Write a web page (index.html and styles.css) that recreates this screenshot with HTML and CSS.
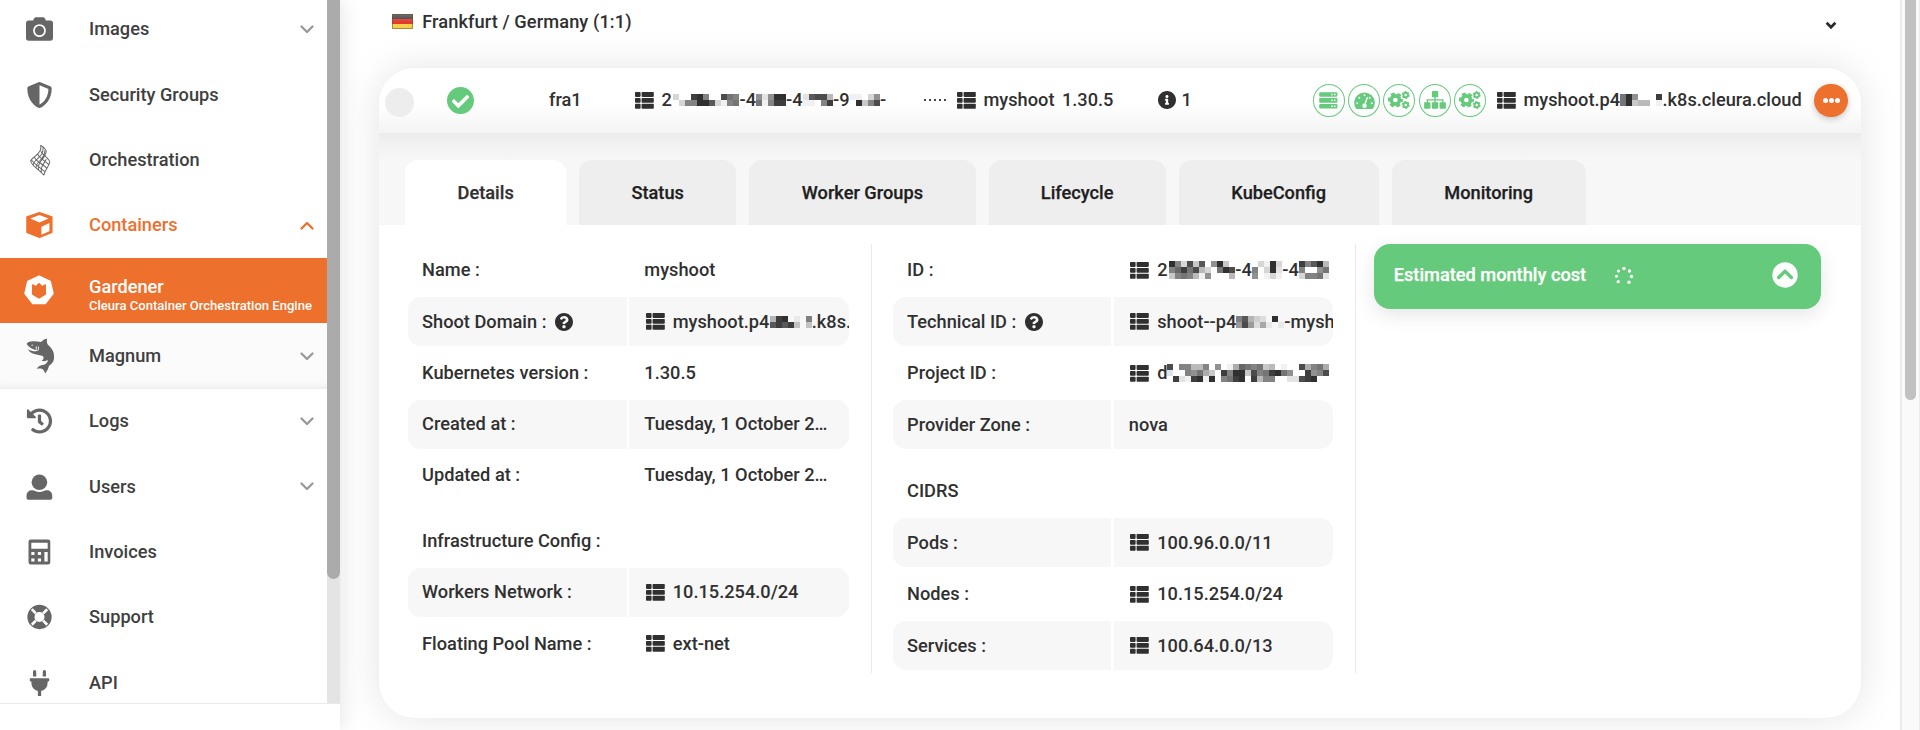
FILE: index.html
```html
<!DOCTYPE html>
<html lang="en">
<head>
<meta charset="utf-8">
<title>Cleura - Gardener</title>
<link rel="stylesheet" href="styles.css">
</head>
<body>
<svg class="defs" aria-hidden="true">
  <symbol id="list" viewBox="0 0 19 17"><rect x="0" y="0" width="5.6" height="4.9" rx=".8"/><rect x="6.6" y="0" width="12.2" height="4.9" rx=".8"/><rect x="0" y="5.9" width="5.6" height="4.9" rx=".8"/><rect x="6.6" y="5.9" width="12.2" height="4.9" rx=".8"/><rect x="0" y="11.8" width="5.6" height="4.9" rx=".8"/><rect x="6.6" y="11.8" width="12.2" height="4.9" rx=".8"/></symbol>
  <symbol id="help" viewBox="8 8 496 496"><path d="M504 256c0 136.997-111.043 248-248 248S8 392.997 8 256C8 119.083 119.043 8 256 8s248 111.083 248 248zM262.655 90c-54.497 0-89.255 22.957-116.549 63.758-3.536 5.286-2.353 12.415 2.715 16.258l34.699 26.31c5.205 3.947 12.621 3.008 16.665-2.122 17.864-22.658 30.113-35.797 57.303-35.797 20.429 0 45.698 13.148 45.698 32.958 0 14.976-12.363 22.667-32.534 33.976C247.128 238.528 216 254.941 216 296v4c0 6.627 5.373 12 12 12h56c6.627 0 12-5.373 12-12v-1.333c0-28.462 83.186-29.647 83.186-106.667 0-58.002-60.165-102-116.531-102zM256 338c-25.365 0-46 20.635-46 46 0 25.364 20.635 46 46 46s46-20.636 46-46c0-25.365-20.635-46-46-46z"/></symbol>
  <symbol id="down" viewBox="0 0 14 9"><path d="M1.5 1.5 7 7l5.500-5.500" fill="none" stroke="currentColor" stroke-width="2.300" stroke-linecap="round" stroke-linejoin="round"/></symbol>
  <symbol id="cogs" viewBox="0 0 23 18">
    <g fill="none" stroke="currentColor"><circle cx="7.700" cy="9" r="4.300" stroke-width="3.800"/><circle cx="7.700" cy="9" r="6.800" stroke-width="2.400" stroke-dasharray="4.100 3.020" stroke-dashoffset="2.050"/>
    <circle cx="18.500" cy="3.800" r="2.300" stroke-width="2"/><circle cx="18.500" cy="3.800" r="3.400" stroke-width="1.400" stroke-dasharray="2 1.560"/>
    <circle cx="18.500" cy="14.200" r="2.300" stroke-width="2"/><circle cx="18.500" cy="14.200" r="3.400" stroke-width="1.400" stroke-dasharray="2 1.560"/></g>
  </symbol>
</svg>

<div class="app">
  <aside class="side">
    <div class="side-scroll">
      <nav class="menu">
        <a class="item"><svg class="ic" viewBox="0 32 512 448"><path d="M512 144v288c0 26.500-21.500 48-48 48H48c-26.500 0-48-21.500-48-48V144c0-26.500 21.500-48 48-48h88l12.300-32.900c7-18.700 24.900-31.100 44.900-31.100h125.500c20 0 37.900 12.400 44.900 31.100L376 96h88c26.500 0 48 21.500 48 48zM376 288c0-66.200-53.800-120-120-120s-120 53.800-120 120 53.800 120 120 120 120-53.800 120-120zm-32 0c0 48.500-39.500 88-88 88s-88-39.500-88-88 39.500-88 88-88 88 39.500 88 88z"/></svg><span>Images</span><svg class="chev"><use href="#down"/></svg></a>
        <a class="item"><svg class="ic" viewBox="0 0 512 512"><path d="M466.500 83.700l-192-80a48.150 48.150 0 0 0-36.900 0l-192 80C27.700 91.100 16 108.600 16 128c0 198.500 114.500 335.700 221.500 380.300 11.800 4.900 25.100 4.900 36.900 0C360.100 472.600 496 349.300 496 128c0-19.400-11.700-36.900-29.500-44.300zM256.100 446.300l-.1-381 175.900 73.300c-3.300 151.400-82.100 261.100-175.800 307.700z"/></svg><span>Security Groups</span></a>
        <a class="item"><svg class="ic heat" viewBox="0 0 22 33" fill="none" stroke="currentColor" stroke-width="1.050"><path d="M11 .5c5.500 3 7.500 6.500 4.500 10.500M11 .5c1.500 5-1.500 8-5.500 11.500S0 16.500 1 18c2 5.500 9 8 13.500 14M13.500 3c1 5-2 8.500-5.500 11.500s-5 5-4.500 7.500M15.500 6c0 4-2 7.500-5 10.500s-4.500 5-4 7.500M15.500 11c-1 3-5 6.500-6 9.500-.8 2.500-1 3.500-.5 6M17 15c-1 3-3.500 5-4.500 8s-1 4-.5 6.500M15.500 11c1.500 3 6 5 5 8-1.200 4.500-5.500 8-6 13M11.500 7c1 2.500 2.500 3 3.500 4M8 10c2.500 4.500 8 7 12 11M4.500 13c3 5.500 9 7 13.500 12M1.500 16c4 5 9 8 14 12"/></svg><span>Orchestration</span></a>
        <a class="item open"><svg class="ic" viewBox="0 0 27 26"><path d="M13.500.8 25.800 5v15.300L13.500 25.200 1 20.300V5z" stroke="currentColor" stroke-width="1.500" stroke-linejoin="round"/><path d="M4.300 6.600 13.400 3l9.200 3.600-9.200 4zM15.400 14.800l8-3.700v8.200l-8 3.400z" fill="#fff"/></svg><span>Containers</span><svg class="chev up"><use href="#down"/></svg></a>
        <a class="item active"><svg class="ic big" viewBox="0 0 30 30"><path d="M15 1.200 26.200 6.500 29 18.500 21.200 28.500H8.800L1 18.500 3.800 6.500z" fill="#fff" stroke="#fff" stroke-width="1.500" stroke-linejoin="round"/><path d="M8 9.300c1.500.2 2.700.8 3.500 1.600L15 7.800l3.500 3.100c.8-.8 2-1.400 3.500-1.600v10.200L15.500 23.600h-1L8 19.500z" fill="#ed702d"/></svg><span>Gardener<small>Cleura Container Orchestration Engine</small></span></a>
        <a class="item sub"><svg class="ic shark" viewBox="0 0 30 38"><path d="M.5 6.300C1 3.300 9 2.800 15.500 4.300c2-2.300 4.500-3.500 6.500-3.800-.6 2.500-.2 5 1 7 4.500 3.500 6.700 8 6.300 13.500-.3 4.500-3 6.500-5.300 8.300-.6 3-2 5.500-4 8.200-.8-2.500-2-4.200-3.300-4.800-1.700-.7-3.700-.5-5.700-.2 1.500-3 5-4.300 8-4.300 3-1.700 4-3.200 3.500-5.200-1.500 1.500-3.500 1.800-6.500 1 2.500-1.500 3-2.800 1.500-5C12 17.500 4 17 1.800 11.800 6 14 10 14.500 13.500 13.300 9 12.500 3 11 .5 6.300z"/><path d="M10.500 9v3.500M12.800 9v3.500" stroke="#fbfbfb" stroke-width="1"/><circle cx="6.200" cy="7.600" r=".7" fill="#fbfbfb"/></svg><span>Magnum</span><svg class="chev"><use href="#down"/></svg></a>
        <a class="item"><svg class="ic" viewBox="0 0 512 512"><path d="M504 255.531c.253 136.640-111.180 248.372-247.820 248.468-59.015.042-113.223-20.530-155.822-54.911-11.077-8.940-11.905-25.541-1.839-35.607l11.267-11.267c8.609-8.609 22.353-9.551 31.891-1.984C173.062 425.135 212.781 440 256 440c101.705 0 184-82.311 184-184 0-101.705-82.311-184-184-184-48.814 0-93.149 18.969-126.068 49.932l50.754 50.754c10.080 10.080 2.941 27.314-11.313 27.314H24c-8.837 0-16-7.163-16-16V38.627c0-14.254 17.234-21.393 27.314-11.314l49.372 49.372C129.209 34.136 189.552 8 256 8c136.810 0 247.747 110.780 248 247.531zm-180.912 78.784l9.823-12.630c8.138-10.463 6.253-25.542-4.210-33.679L288 256.349V152c0-13.255-10.745-24-24-24h-16c-13.255 0-24 10.745-24 24v135.651l65.409 50.874c10.463 8.137 25.541 6.253 33.679-4.210z"/></svg><span>Logs</span><svg class="chev"><use href="#down"/></svg></a>
        <a class="item"><svg class="ic" viewBox="0 0 27 27"><circle cx="13.400" cy="8.500" r="8.100"/><path d="M0 23.500C0 18.800 2.600 17 6 17c1.600 0 4 1.700 7.400 1.700S19.200 17 20.800 17c3.400 0 6 1.800 6 6.500v.8c0 1.300-1 2.400-2.400 2.400h-22C1 26.700 0 25.600 0 24.300z"/></svg><span>Users</span><svg class="chev"><use href="#down"/></svg></a>
        <a class="item"><svg class="ic" viewBox="0 0 27 27"><path fill-rule="evenodd" d="M4.400.5h18a2.300 2.300 0 0 1 2.300 2.300v21.400a2.300 2.300 0 0 1-2.300 2.300h-18a2.300 2.300 0 0 1-2.300-2.300V2.800A2.300 2.300 0 0 1 4.400.5zM5 4v6h17V4zM5 13.500v3h3.300v-3zm6.800 0v3h3.300v-3zm6.800 0v9.800H22v-9.800zM5 20.300v3h3.300v-3zm6.800 0v3h3.300v-3z"/></svg><span>Invoices</span></a>
        <a class="item"><svg class="ic" viewBox="0 0 27 27"><circle cx="13.500" cy="13.500" r="8.900" fill="none" stroke="currentColor" stroke-width="7.400"/><path d="m5.500 5.500 4.200 4.200m7.600 7.600 4.200 4.200m0-16-4.200 4.200m-7.600 7.600-4.200 4.200" stroke="#fff" stroke-width="2.800"/></svg><span>Support</span></a>
        <a class="item"><svg class="ic" viewBox="-64 0 512 512"><path d="M320 32a32 32 0 0 0-64 0v96h64zm48 128H16a16 16 0 0 0-16 16v32a16 16 0 0 0 16 16h16v32a160.070 160.070 0 0 0 128 156.800V512h64v-99.200A160.070 160.070 0 0 0 352 256v-32h16a16 16 0 0 0 16-16v-32a16 16 0 0 0-16-16zM128 32a32 32 0 0 0-64 0v96h64z"/></svg><span>API</span></a>
      </nav>
      <div class="side-track"><div class="side-thumb"></div></div>
    </div>
  </aside>

  <main class="main">
    <header class="region">
      <svg class="flag" viewBox="0 0 21 15"><defs><linearGradient id="shine" x1="0" y1="0" x2="0" y2="1"><stop offset="0" stop-color="#fff" stop-opacity=".3"/><stop offset=".5" stop-color="#fff" stop-opacity=".08"/><stop offset="1" stop-color="#fff" stop-opacity="0"/></linearGradient></defs><path fill="#333" d="M0 0h21v5H0z"/><path fill="#e02d22" d="M0 5h21v5H0z"/><path fill="#f6cf45" d="M0 10h21v5H0z"/><path fill="url(#shine)" d="M0 0h21v15H0z"/><path fill="none" stroke="#6b5020" stroke-opacity=".55" d="M.5.5h20v14H.5z"/></svg>
      <span class="region-name">Frankfurt / Germany (1:1)</span>
      <svg class="region-chev" viewBox="0 0 12 9"><path d="M1.600 1.800 6 6.300l4.400-4.500" fill="none" stroke="#2b2b2b" stroke-width="2.700"/></svg>
    </header>

    <section class="card">
      <div class="head">
        <i class="radio"></i>
        <svg class="ok" viewBox="8 8 496 496"><path d="M504 256c0 136.967-111.033 248-248 248S8 392.967 8 256 119.033 8 256 8s248 111.033 248 248zM227.314 387.314l184-184c6.248-6.248 6.248-16.379 0-22.627l-22.627-22.627c-6.248-6.249-16.379-6.249-22.628 0L216 308.118l-70.059-70.059c-6.248-6.248-16.379-6.248-22.628 0l-22.627 22.627c-6.248 6.248-6.248 16.379 0 22.627l104 104c6.249 6.249 16.379 6.249 22.628.001z"/></svg>
        <span>fra1</span>
        <span class="val"><svg class="list"><use href="#list"/></svg><span class="seg w12">2</span><i class="redact" data-rows="300ef900da9/0399ffc319af"></i><span class="seg">-4</span><i class="redact" data-rows="828ff/a19ee"></i><span class="seg w17">-4</span><i class="redact" data-rows="2cdd5/1109e"></i><span class="seg w17">-9</span><i class="redact" data-rows="11038/0f49d"></i><span class="seg">-</span></span>
        <span class="dots"><i></i><i></i><i></i><i></i><i></i></span>
        <span class="val"><svg class="list"><use href="#list"/></svg><span>myshoot</span><span class="version">1.30.5</span></span>
        <span class="info"><svg viewBox="8 8 496 496"><path d="M256 8C119.043 8 8 119.083 8 256c0 136.997 111.043 248 248 248s248-111.003 248-248C504 119.083 392.957 8 256 8zm0 110c23.196 0 42 18.804 42 42s-18.804 42-42 42-42-18.804-42-42 18.804-42 42-42zm56 254c0 6.627-5.373 12-12 12h-88c-6.627 0-12-5.373-12-12v-24c0-6.627 5.373-12 12-12h12v-64h-12c-6.627 0-12-5.373-12-12v-24c0-6.627 5.373-12 12-12h64c6.627 0 12 5.373 12 12v100h12c6.627 0 12 5.373 12 12v24z"/></svg>1</span>
        <span class="states">
          <b class="state"><svg viewBox="0 0 19 17"><path fill-rule="evenodd" d="M1.200.2h16.200a1 1 0 0 1 1 1v2.600a1 1 0 0 1-1 1H1.200a1 1 0 0 1-1-1V1.200a1 1 0 0 1 1-1zM12.300 1.700v1.500h1.500V1.700zm2.700 0v1.500h1.500V1.700zM1.200 6.100h16.200a1 1 0 0 1 1 1v2.600a1 1 0 0 1-1 1H1.200a1 1 0 0 1-1-1V7.100a1 1 0 0 1 1-1zM12.300 7.600v1.500h1.500V7.600zm2.700 0v1.500h1.500V7.600zM1.200 12h16.200a1 1 0 0 1 1 1v2.600a1 1 0 0 1-1 1H1.200a1 1 0 0 1-1-1V13a1 1 0 0 1 1-1zm11.100 1.500V15h1.500v-1.500zm2.700 0V15h1.500v-1.500z"/></svg></b>
          <b class="state"><svg class="w21" viewBox="0 0 21 17"><path d="M2 16.600A10.300 10.300 0 1 1 19 16.600c-.3.300-.6.400-1 .4H3c-.4 0-.7-.1-1-.4z"/><g fill="#fff"><circle cx="3.200" cy="11.300" r="1"/><circle cx="5.300" cy="5.700" r="1"/><circle cx="10.500" cy="3.200" r="1"/><circle cx="15.700" cy="5.700" r="1"/><circle cx="17.800" cy="11.300" r="1"/><circle cx="10.500" cy="13.700" r="2.200"/></g><path d="m10.500 13.500 2.700-7.800" stroke="#fff" stroke-width="1.400" stroke-linecap="round"/></svg></b>
          <b class="state"><svg class="w23"><use href="#cogs"/></svg></b>
          <b class="state"><svg class="w23" viewBox="0 0 23 19"><rect x="8.200" y="0" width="6.700" height="6.700" rx=".9"/><rect x="0" y="12" width="6.700" height="6.700" rx=".9"/><rect x="8.200" y="12" width="6.700" height="6.700" rx=".9"/><rect x="16.300" y="12" width="6.700" height="6.700" rx=".9"/><path d="M11.500 6v7M3.400 13V9.300h16.300V13" fill="none" stroke="currentColor" stroke-width="1.400"/></svg></b>
          <b class="state"><svg class="w23"><use href="#cogs"/></svg></b>
        </span>
        <span class="val"><svg class="list"><use href="#list"/></svg><span class="seg w97">myshoot.p4</span><i class="redact" data-rows="af8000e/af45501"></i><span class="seg">.k8s.cleura.cloud</span></span>
        <button class="more"><i></i><i></i><i></i></button>
      </div>

      <div class="tabs">
        <a class="tab on">Details</a><a class="tab t2">Status</a><a class="tab t3">Worker Groups</a><a class="tab t4">Lifecycle</a><a class="tab t5">KubeConfig</a><a class="tab t6">Monitoring</a>
      </div>

      <div class="body">
        <div class="col one">
          <div class="row"><div>Name :</div><div>myshoot</div></div>
          <div class="row alt"><div>Shoot Domain :<svg class="help"><use href="#help"/></svg></div><div class="iv"><svg class="list"><use href="#list"/></svg><span class="seg w97">myshoot.p4</span><i class="redact" data-rows="5ef0109/cece404"></i><span class="seg">.k8s.</span></div></div>
          <div class="row"><div>Kubernetes version :</div><div>1.30.5</div></div>
          <div class="row alt"><div>Created at :</div><div>Tuesday, 1 October 2…</div></div>
          <div class="row"><div>Updated at :</div><div>Tuesday, 1 October 2…</div></div>
          <div class="row gap"><div>Infrastructure Config :</div><div></div></div>
          <div class="row alt"><div>Workers Network :</div><div class="iv"><svg class="list"><use href="#list"/></svg><span>10.15.254.0/24</span></div></div>
          <div class="row"><div>Floating Pool Name :</div><div class="iv"><svg class="list"><use href="#list"/></svg><span>ext-net</span></div></div>
        </div>
        <div class="col two">
          <div class="row"><div>ID :</div><div class="iv"><svg class="list"><use href="#list"/></svg><span class="seg w12">2</span><i class="redact" data-rows="f93d4c08f40/9bead530afd/49a95180005"></i><span class="seg w17">-4</span><i class="redact" data-rows="031f3/903f2/80131"></i><span class="seg w17">-4</span><i class="redact" data-rows="e9cf5/9008a/399a2"></i></div></div>
          <div class="row alt"><div>Technical ID :<svg class="help"><use href="#help"/></svg></div><div class="iv"><svg class="list"><use href="#list"/></svg><span class="seg w79">shoot--p4</span><i class="redact" data-rows="9c5320f0/7d726101"></i><span class="seg">-mysh</span></div></div>
          <div class="row"><div>Project ID :</div><div class="iv"><svg class="list"><use href="#list"/></svg><span class="seg w10">d</span><i class="redact" data-rows="d09955908016ba9a450100d69a6/20098a640e9ff4d9aefa800e89d/0e21ef1f09aef0e5990022def00"></i></div></div>
          <div class="row alt"><div>Provider Zone :</div><div>nova</div></div>
          <div class="row gap"><div>CIDRS</div><div></div></div>
          <div class="row alt"><div>Pods :</div><div class="iv"><svg class="list"><use href="#list"/></svg><span>100.96.0.0/11</span></div></div>
          <div class="row"><div>Nodes :</div><div class="iv"><svg class="list"><use href="#list"/></svg><span>10.15.254.0/24</span></div></div>
          <div class="row alt"><div>Services :</div><div class="iv"><svg class="list"><use href="#list"/></svg><span>100.64.0.0/13</span></div></div>
        </div>
        <div class="cost">
          <span>Estimated monthly cost</span>
          <svg class="spin" viewBox="0 0 20 20" fill="#fff"><circle cx="10" cy="2.500" r="1.700"/><circle cx="15.500" cy="5" r="1.700"/><circle cx="17.500" cy="10.500" r="1.700"/><circle cx="15" cy="16.200" r="1.700"/><circle cx="4.500" cy="5" r="1.500"/><circle cx="2.500" cy="10.300" r="1.500"/><circle cx="4.200" cy="15.700" r="1.600"/></svg>
          <svg class="fold" viewBox="0 0 26 26"><circle cx="13" cy="13" r="12.700" fill="#fff"/><path d="m6.600 15.500 6.400-6.300 6.400 6.300" fill="none" stroke="#65ca7b" stroke-width="3.300" stroke-linecap="round"/></svg>
        </div>
      </div>
    </section>
  </main>
  <div class="page-track"><div class="page-thumb"></div></div>
</div>
<script src="redact.js"></script>
</body>
</html>
```
FILE: styles.css
```css
* { box-sizing: border-box; }
body { margin: 0; background: #fff; color: #303030; font: 500 18.22px/24px Roboto, "Liberation Sans", sans-serif; overflow: hidden; }
svg { fill: currentColor; flex: none; }
.defs { display: none; }
.app { display: flex; width: 1920px; height: 730px; overflow: hidden; }

.side { width: 340px; flex: none; background: #fff; box-shadow: 0 0 22px rgba(0,0,0,.12); z-index: 1; }
.side-scroll { display: flex; height: 704px; border-bottom: 1.500px solid #e9e9e9; overflow: hidden; }
.menu { width: 327px; margin-top: -3.300px; }
.item { display: grid; grid-template-columns: 63px 1fr 14px; align-items: center; height: 65.330px; padding: 0 13.500px 0 26px; color: #404040; }
.item .ic { width: 27px; height: 26px; color: #666; }
.item .heat { width: 21px; height: 33px; margin: 1px 0 0 4px; fill: none; }
.item .big { width: 30px; height: 30px; margin: -2px 0 0 -2.500px; }
.item .shark { width: 29px; height: 36px; }
.chev { width: 14px; height: 9px; color: #999; }
.open, .item.open .ic, .open .chev { color: #ed702d; }
.up { transform: rotate(180deg); }
.active { background: #ed702d; color: #fff; grid-template-columns: 63px 1fr; padding-right: 0; }
.active span { padding-top: 11px; line-height: 20px; }
.active small { display: block; font-size: 13.050px; line-height: 18px; white-space: nowrap; }
.sub { background: #fbfbfb; box-shadow: inset 0 -9px 9px -8px rgba(0,0,0,.09); }
.side-track { width: 13px; background: #e4e4e4; }
.side-thumb { height: 579px; background: #ababab; border-radius: 0 0 7px 7px; }

.main { width: 1560px; flex: none; padding-left: 38.700px; }
.region { display: flex; align-items: center; height: 67.500px; padding: 0 63.500px 24.500px 13px; }
.region-name { letter-spacing: .1px; }
.flag { width: 21px; height: 15px; margin-right: 9.500px; }
.region-chev { width: 12px; height: 9px; margin: 7px 0 0 auto; }

.card { width: 1482px; height: 650px; border-radius: 36px; background: #fff; box-shadow: 0 0 40px rgba(0,0,0,.11); overflow: hidden; }
.head { display: grid; grid-template-columns: 62px 102px 86px 289px 33px 201px 155px 184px 317.500px 40px; align-items: center; height: 65.500px; padding-left: 6.300px; background: linear-gradient(#fff 55%, #f4f4f4); white-space: nowrap; }
.radio { width: 29px; height: 29px; margin-top: 4px; border-radius: 50%; background: #ededed; }
.ok { width: 27px; height: 27px; color: #65ca7b; }
.val, .iv { display: flex; align-items: center; }
.list { width: 19px; height: 17px; margin-right: 8px; }
.head .list { margin-right: 7.500px; }
.version { margin-left: 7.500px; }
.redact { display: block; flex: none; }
.redact svg { display: block; }
.seg { flex: none; }
.w10 { width: 10px; } .w12 { width: 12px; } .w17 { width: 17px; } .w79 { width: 79px; } .w97 { width: 97px; }
.dots { display: flex; gap: 3px; }
.dots i { width: 2px; height: 2px; background: #444; }
.info { display: flex; align-items: center; gap: 5.500px; }
.info svg { width: 18px; height: 18px; }
.states { display: flex; gap: 3.200px; }
.state { display: grid; place-items: center; width: 32px; height: 33px; border: 1.400px solid #65ca7b; border-radius: 50%; color: #65ca7b; }
.state svg { width: 19px; height: 17px; }
.state .w21 { width: 21px; }
.state .w23 { width: 22px; height: 18px; }
.more { display: flex; align-items: center; justify-content: center; gap: 1.200px; width: 33.500px; height: 33.500px; padding: 0; border: 0; border-radius: 50%; background: #ed702d; box-shadow: 0 2px 6px rgba(0,0,0,.22); }
.more i { width: 5px; height: 5px; border-radius: 50%; background: #fff; }

.tabs { display: flex; gap: 13px; height: 92px; padding: 27px 26px 0 26.500px; background: linear-gradient(#ebebeb, #f3f3f3 14px, #f7f7f7 28px); color: #1e1e1e; }
.tab { height: 65px; width: 161px; border-radius: 13px 13px 0 0; background: #eee; text-align: center; line-height: 65px; -webkit-text-stroke: .25px; }
.on { background: #fff; color: #303030; }
.t2 { width: 157px; } .t3 { width: 226.500px; } .t4 { width: 177px; } .t5 { width: 200px; } .t6 { width: 194px; }

.body { display: flex; align-items: flex-start; padding: 18.500px 0 0 29px; }
.col { display: flex; flex-direction: column; gap: 2.600px; height: 429.500px; padding-top: 2.500px; border-right: 1.500px solid #eaeaea; }
.one { width: 464px; padding-right: 22px; }
.two { width: 484px; gap: 2.800px; padding: 2.300px 22px 0 21px; }
.row { display: grid; grid-template-columns: 1fr 1fr; gap: 2.500px; height: 48.700px; flex: none; white-space: nowrap; }
.row > div { display: flex; align-items: center; padding: 0 0 0 14.400px; overflow: hidden; min-width: 0; }
.row > :last-child { padding-left: 14.900px; }
.row > .iv { padding-left: 16.300px; padding-top: .5px; }
.alt > div { background: #f7f7f7; }
.alt > :first-child { border-radius: 13px 0 0 13px; }
.alt > :last-child { border-radius: 0 13px 13px 0; }
.gap { margin-top: 14.200px; }
.two .gap { margin-top: 15px; }
.help { width: 18px; height: 18px; margin-left: 9px; }
.cost { display: flex; align-items: center; width: 447px; height: 65px; margin-left: 18px; padding: 0 22.500px 3px 20px; border-radius: 16px; background: #65ca7b; color: #fff; box-shadow: 0 6px 20px rgba(0,0,0,.1); -webkit-text-stroke: .25px; }
.spin { width: 20px; height: 20px; margin: 3px 0 0 28px; }
.fold { width: 26px; height: 26px; margin: 1px 0 0 auto; }

.page-track { width: 20px; flex: none; height: 730px; padding: 0 2px 0 3px; background: #fafafa; border-left: 2px solid #ebebeb; border-right: 1.500px solid #ebebeb; }
.page-thumb { width: 11px; height: 400px; border-radius: 0 0 6px 6px; background: #c1c1c1; }
```
FILE: redact.js
```
/* Renders masked identifiers as a grid of 6px grey blocks; each hex digit is a block's darkness. */
document.querySelectorAll('.redact').forEach(function (el) {
  var rows = el.dataset.rows.split('/');
  var width = rows[0].length * 6, height = rows.length * 6, cells = '';
  rows.forEach(function (row, y) {
    row.slice(0, rows[0].length).split('').forEach(function (digit, x) {
      cells += '<rect x="' + x * 6 + '" y="' + y * 6 + '" width="6" height="6" fill="#303030" fill-opacity="' + parseInt(digit, 16) / 15 + '"/>';
    });
  });
  el.innerHTML = '<svg width="' + width + '" height="' + height + '" shape-rendering="crispEdges">' + cells + '</svg>';
});
```
